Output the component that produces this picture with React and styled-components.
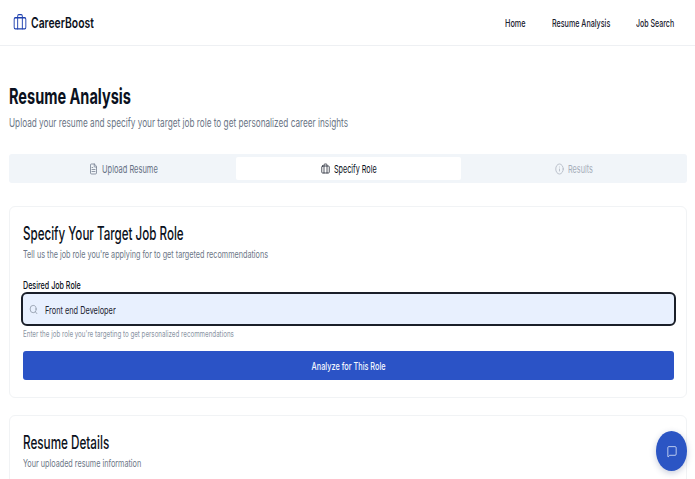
import styled, { createGlobalStyle } from 'styled-components'
import { Briefcase, FileText, Info, Search, MessageSquare } from 'lucide-react'

const Global = createGlobalStyle`
  html, body { margin: 0; padding: 0; background: #fff; }
  body { width: 695px; height: 479px; overflow: hidden; font-family: Inter, "Liberation Sans", sans-serif; color: #0b1120; }
`

// the whole capture is squeezed sideways, so text gets narrowed too
const Narrow = styled.span`
  display: inline-block;
  white-space: nowrap;
  transform: scaleX(${p => p.$x || 0.7});
  transform-origin: ${p => p.$origin || 'left'} center;
`

const Page = styled.div`
  position: relative;
  height: 479px;
  overflow: hidden;
`

const Header = styled.header`
  height: 45px;
  border-bottom: 1px solid #eef0f3;
  display: flex;
  align-items: center;
  justify-content: space-between;
  padding: 0 21px 0 13px;
`

const Logo = styled.div`
  display: flex;
  align-items: center;
  gap: 4px;
  color: #1e40af;
`

const LogoText = styled.div`
  width: 64px;
  font-size: 14px;
  font-weight: 600;
  color: #0b1120;
`

const Nav = styled.nav`
  display: flex;
  gap: 26px;
`

const NavLink = styled.a`
  width: ${p => p.$w}px;
  font-size: 11px;
  font-weight: 500;
  color: #1b2230;
`

const Main = styled.main`
  padding: 36px 8px 0 9px;
`

const Title = styled.h1`
  margin: 0;
  font-size: 22px;
  line-height: 28px;
  font-weight: 700;
`

const Subtitle = styled.p`
  margin: 5px 0 0;
  font-size: 11.5px;
  line-height: 16px;
  color: #6b7686;
`

const Tabs = styled.div`
  margin-top: 23px;
  height: 29px;
  box-sizing: border-box;
  padding: 3px 0;
  background: #f1f5f9;
  border-radius: 3px;
  display: grid;
  grid-template-columns: 227px 225px 1fr;
`

const Tab = styled.div`
  display: flex;
  align-items: center;
  justify-content: center;
  gap: 4px;
  font-size: 11px;
  font-weight: 400;
  border-radius: 2px;
  background: ${p => (p.$active ? '#fff' : 'transparent')};
  color: ${p => (p.$active ? '#0b1120' : p.$off ? '#a6aeba' : '#667184')};
`

const TabLabel = styled.div`
  width: ${p => p.$w}px;
`

const Card = styled.section`
  margin-top: ${p => p.$top}px;
  box-sizing: border-box;
  height: ${p => p.$h}px;
  border: 1px solid #f1f3f5;
  border-radius: 6px;
  padding: 16px 13px 0 13px;
`

const CardTitle = styled.h2`
  margin: 0;
  font-size: 18px;
  line-height: 22px;
  font-weight: 500;
  color: #0b1120;
`

const CardSub = styled.p`
  margin: 3px 0 0;
  font-size: 10.5px;
  line-height: 14px;
  color: #6b7686;
`

const Label = styled.label`
  display: block;
  margin-top: 18px;
  font-size: 10.5px;
  line-height: 12px;
  font-weight: 500;
  color: #0b1120;
`

const InputBox = styled.div`
  margin: 0 0 0 -2px;
  height: 34px;
  box-sizing: border-box;
  width: 655px;
  display: flex;
  align-items: center;
  gap: 7px;
  padding-left: 6px;
  background: #e8f0fe;
  border: 2px solid #1a1f29;
  border-radius: 6px;
  color: #7b8696;
  font-size: 10.5px;
`

const InputValue = styled.div`
  padding-top: 2px;
  color: #1b2230;
`

const Hint = styled.div`
  margin-top: 2px;
  font-size: 9px;
  line-height: 12px;
  color: #8a94a3;
`

const Submit = styled.button`
  display: flex;
  align-items: center;
  justify-content: center;
  width: 651px;
  height: 29px;
  margin-top: 11px;
  padding: 0;
  border: 0;
  border-radius: 3px;
  background: #2b53c6;
  color: #f4f7fe;
  font-family: inherit;
  font-size: 11px;
  font-weight: 500;
`

const ChatFab = styled.button`
  position: absolute;
  left: 656px;
  top: 431px;
  width: 31px;
  height: 40px;
  padding: 0;
  border: 0;
  border-radius: 50%;
  background: #2b55c4;
  color: #e8eefb;
  display: flex;
  align-items: center;
  justify-content: center;
  box-shadow: 0 2px 6px rgba(30, 50, 110, 0.25);
`

const Squeezed = ({ Icon, w, h, sw = 1.6 }) => (
  <Icon width={w} height={h} strokeWidth={sw} preserveAspectRatio="none" />
)

export default function App() {
  return (
    <Page>
      <Global />
      <Header>
        <Logo>
          <Squeezed Icon={Briefcase} w={14} h={19} />
          <LogoText><Narrow $x={0.74}>CareerBoost</Narrow></LogoText>
        </Logo>
        <Nav>
          <NavLink $w={21}><Narrow $x={0.66}>Home</Narrow></NavLink>
          <NavLink $w={58}><Narrow $x={0.65}>Resume Analysis</Narrow></NavLink>
          <NavLink $w={38}><Narrow $x={0.64}>Job Search</Narrow></NavLink>
        </Nav>
      </Header>
      <Main>
        <Title><Narrow $x={0.66}>Resume Analysis</Narrow></Title>
        <Subtitle><Narrow $x={0.715}>Upload your resume and specify your target job role to get personalized career insights</Narrow></Subtitle>
        <Tabs>
          <Tab>
            <Squeezed Icon={FileText} w={9} h={12} />
            <TabLabel $w={55}><Narrow $x={0.68}>Upload Resume</Narrow></TabLabel>
          </Tab>
          <Tab $active>
            <Squeezed Icon={Briefcase} w={9} h={12} />
            <TabLabel $w={43}><Narrow $x={0.655}>Specify Role</Narrow></TabLabel>
          </Tab>
          <Tab $off>
            <Squeezed Icon={Info} w={9} h={12} />
            <TabLabel $w={25}><Narrow $x={0.66}>Results</Narrow></TabLabel>
          </Tab>
        </Tabs>
        <Card $top={23} $h={192}>
          <CardTitle><Narrow $x={0.645}>Specify Your Target Job Role</Narrow></CardTitle>
          <CardSub><Narrow $x={0.69}>Tell us the job role you're applying for to get targeted recommendations</Narrow></CardSub>
          <Label><Narrow $x={0.68}>Desired Job Role</Narrow></Label>
          <InputBox>
            <Squeezed Icon={Search} w={9} h={11} />
            <InputValue><Narrow $x={0.7}>Front end Developer</Narrow></InputValue>
          </InputBox>
          <Hint><Narrow $x={0.69}>Enter the job role you're targeting to get personalized recommendations</Narrow></Hint>
          <Submit><Narrow $x={0.665} $origin="center">Analyze for This Role</Narrow></Submit>
        </Card>
        <Card $top={17} $h={100}>
          <CardTitle><Narrow $x={0.65}>Resume Details</Narrow></CardTitle>
          <CardSub><Narrow $x={0.69}>Your uploaded resume information</Narrow></CardSub>
        </Card>
      </Main>
      <ChatFab><Squeezed Icon={MessageSquare} w={10} h={13} /></ChatFab>
    </Page>
  )
}
